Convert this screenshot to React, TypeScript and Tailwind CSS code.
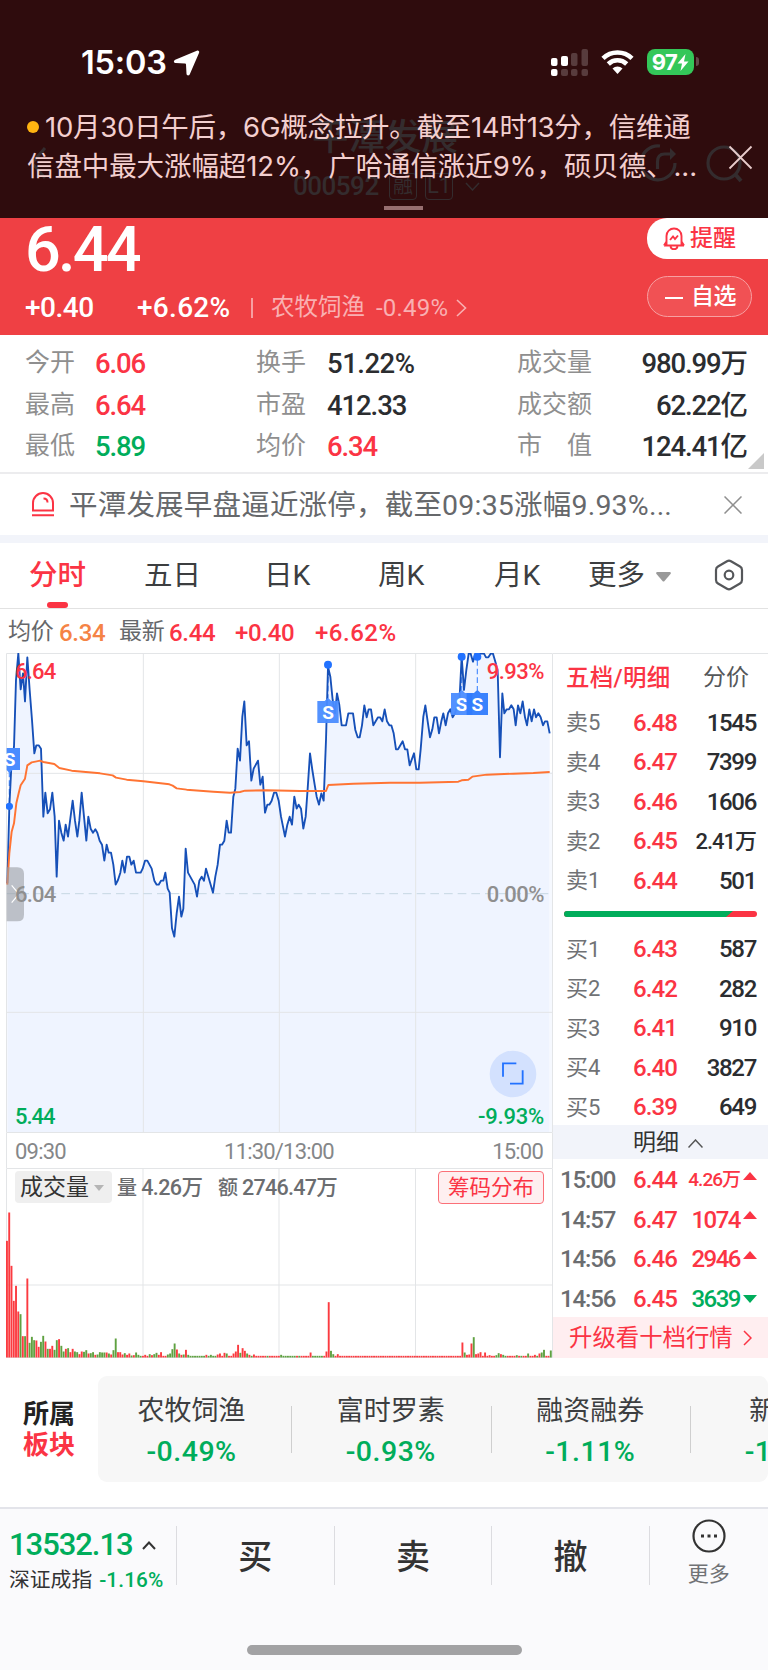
import type { ReactNode } from 'react'

type Level = { label: string; price: string; volume: string }
type Tick = { time: string; price: string; volume: string; up: boolean; small?: boolean }

const sells: Level[] = [
  { label: '卖5', price: '6.48', volume: '1545' },
  { label: '卖4', price: '6.47', volume: '7399' },
  { label: '卖3', price: '6.46', volume: '1606' },
  { label: '卖2', price: '6.45', volume: '2.41万' },
  { label: '卖1', price: '6.44', volume: '501' },
]

const buys: Level[] = [
  { label: '买1', price: '6.43', volume: '587' },
  { label: '买2', price: '6.42', volume: '282' },
  { label: '买3', price: '6.41', volume: '910' },
  { label: '买4', price: '6.40', volume: '3827' },
  { label: '买5', price: '6.39', volume: '649' },
]

const ticks: Tick[] = [
  { time: '15:00', price: '6.44', volume: '4.26万', up: true, small: true },
  { time: '14:57', price: '6.47', volume: '1074', up: true },
  { time: '14:56', price: '6.46', volume: '2946', up: true },
  { time: '14:56', price: '6.45', volume: '3639', up: false },
]

const sectors = [
  { name: '农牧饲渔', change: '-0.49%' },
  { name: '富时罗素', change: '-0.93%' },
  { name: '融资融券', change: '-1.11%' },
  { name: '新能源', change: '-1.02%' },
]

// Chart space: three units per pixel, minute step of about 6.8 units
const priceLine =
  '22,730 28,500 34,380 42,320 48,120 55,40 62,148 69,100 75,184 82,52 89,150 96,240 103,340 109,316 116,316 123,326 130,530 136,458 143,520 150,508 157,458 164,530 170,710 177,542 184,578 191,602 197,554 204,590 211,536 218,482 225,542 232,590 238,542 245,458 252,530 259,602 265,530 272,566 279,578 286,568 292,578 299,602 306,614 313,662 320,614 326,638 333,638 340,674 347,734 354,720 361,698 367,662 374,698 381,650 388,650 394,674 401,662 408,698 422,698 428,686 435,662 442,662 455,686 463,722 470,734 476,734 483,722 490,722 496,698 503,746 509,758 516,865 523,890 530,820 537,770 544,830 550,806 557,626 564,698 584,734 591,770 598,722 605,710 612,722 618,686 639,758 646,710 653,674 660,614 666,614 673,602 680,542 686,578 693,578 700,470 706,446 713,326 720,362 727,230 733,184 740,316 747,304 754,422 761,386 774,362 781,434 788,410 795,518 802,494 808,494 815,482 822,458 829,458 836,482 843,530 855,590 862,554 869,530 876,554 883,470 890,506 896,494 903,506 910,566 917,530 923,446 930,340 937,390 944,434 950,470 957,494 964,460 971,482 978,300 984,80 991,110 998,180 1005,220 1011,160 1018,195 1025,256 1038,256 1045,220 1059,220 1066,270 1073,292 1079,292 1086,256 1093,196 1100,232 1106,208 1113,208 1120,256 1134,232 1140,232 1147,244 1154,208 1161,244 1168,256 1174,256 1181,280 1188,328 1194,328 1208,304 1215,328 1222,328 1229,376 1242,340 1249,388 1256,388 1262,328 1270,230 1276,196 1283,244 1290,292 1297,268 1303,232 1310,232 1317,280 1324,244 1330,220 1337,256 1344,220 1351,208 1358,232 1365,220 1371,200 1378,190 1385,50 1392,150 1399,90 1406,41 1412,41 1419,65 1426,41 1445,41 1452,41 1458,52 1465,52 1472,41 1479,41 1486,65 1493,90 1500,352 1507,160 1513,220 1520,208 1527,208 1534,196 1541,208 1547,256 1554,196 1561,220 1568,184 1575,232 1581,256 1588,208 1595,244 1602,208 1608,232 1615,220 1622,232 1629,256 1635,244 1642,244 1649,280'

const averageLine =
  '22,734 28,640 35,575 42,550 49,490 56,460 62,436 75,416 82,376 95,367 110,364 120,362 130,366 163,372 178,384 215,392 300,400 338,406 348,413 380,419 430,424 508,433 518,437 530,445 560,449 640,455 690,458 720,456 735,452 800,451 900,453 978,453 985,435 1060,431 1170,428 1260,428 1375,425 1385,421 1405,419 1417,410 1460,404 1540,401 1600,399 1649,396'

// Minutes with notable volume, negative when the price fell
const volumes: Record<number, number> = {
  0: 350, 1: 435, 2: 275, 3: 170, 4: 215, 5: 138, 6: -130, 7: 64, 8: -64, 9: 237,
  10: -44, 11: -62, 12: -52, 13: 51, 14: 32, 15: -47, 16: -65, 17: 48, 18: -26, 19: 26,
  20: 35, 21: -23, 22: -52, 23: 55, 24: -35, 25: -18, 26: 26, 27: -28, 28: 16, 29: 26,
  30: -18, 31: -16, 32: 10, 33: 18, 34: -17, 35: -22, 36: 12, 37: -13, 38: -16, 39: 8,
  40: -9, 41: -16, 42: -15, 43: -15, 44: 15, 45: -12, 46: 9, 47: -22, 48: -57, 49: 16,
  50: 16, 51: 9, 52: -13, 53: 8, 54: 12, 55: -6, 56: 7, 57: -15, 58: -8, 61: 8,
  63: -10, 64: 7, 65: -10, 66: -14, 67: 8, 68: 16, 71: -9, 72: -12, 73: -25, 74: -42,
  75: 24, 76: -12, 77: 8, 78: -9, 79: 23, 80: -8, 88: 8, 90: -8, 93: 9, 94: 12,
  96: 14, 97: -12, 100: 12, 101: 18, 102: 38, 103: -14, 104: 28, 105: 20, 106: -12, 107: 8,
  109: 9, 121: -8, 134: 15, 141: 18, 142: 166, 143: -20, 144: -10, 146: 10, 201: 45, 202: -15,
  203: 8, 204: 9, 205: 42, 206: -61, 207: 10, 208: 12, 209: 16, 211: 15, 213: 7, 216: -7,
  217: -13, 218: 10, 219: -8, 225: -7, 230: -12, 233: 8, 235: 12, 236: -15, 237: -23, 238: 5,
  240: -21,
}

const volumeBars = Array.from({ length: 241 }, (_, i) => {
  const quiet = (i > 80 && i < 93) || (i > 121 && i < 128) || (i > 134 && i < 140) || i % 7 === 3
  return volumes[i] ?? (quiet && (i < 148 || i > 210) ? -5 : 5)
})

function StatusBar() {
  return (
    <div className="flex h-[100px] pt-[48px] pl-[81px] font-['Inter',sans-serif] text-white">
      <div className="w-[92px] text-[32.500px] leading-[30px] font-semibold tracking-[-0.2px] whitespace-nowrap">15:03</div>
      <svg className="mt-[2px] h-[26px] w-[27px]" viewBox="0 0 27 26" fill="currentColor">
        <path d="M23.800.7 2.200 9.800C.2 10.700.7 13 2.600 13.100l9.400.3q1 0 1 1l.5 9.300c.1 2 2.500 2.300 3.300.5l9.300-21.500c.6-1.500-.8-2.600-2.300-2Z" />
      </svg>
      <svg className="mt-[1px] ml-[351px] h-[28px] w-[38px]" viewBox="0 0 38 28" fill="currentColor">
        <rect x="0" y="9" width="6.500" height="8" rx="2" />
        <rect x="10" y="7" width="7" height="10" rx="2" />
        <rect x="20" y="4" width="6.500" height="13" rx="2" opacity=".2" />
        <rect x="30.500" y="0" width="6.500" height="17" rx="2" opacity=".2" />
        <rect x="0" y="20" width="6.500" height="7" rx="2" />
        <rect x="10" y="20" width="7" height="7" rx="2" opacity=".2" />
        <rect x="20" y="20" width="6.500" height="7" rx="2" opacity=".2" />
        <rect x="30.500" y="20" width="6.500" height="7" rx="2" opacity=".2" />
      </svg>
      <svg className="mt-[2px] ml-[12px] h-[24px] w-[33px]" viewBox="0 0 33 24" fill="none" stroke="currentColor" strokeWidth="4.600">
        <path d="M2 8.300a21 21 0 0 1 29 0" />
        <path d="M7.300 14a13.300 13.300 0 0 1 18.400 0" />
        <path d="M11.500 18.600a7.300 7.300 0 0 1 10 0L16.500 24Z" fill="currentColor" stroke="none" />
      </svg>
      <div className="mt-[1px] ml-[13px] flex h-[26px] w-[47px] items-center justify-center rounded-[8px] bg-[#34c759] text-[22px] font-bold tracking-[-0.5px]">
        97
        <svg className="h-[17px] w-[12px]" viewBox="0 0 12 17" fill="currentColor">
          <path d="M8.500 0 .5 9.500H5L3.500 17l8-9.500H7Z" />
        </svg>
      </div>
      <div className="mt-[9px] ml-[2px] h-[9px] w-[3px] rounded-r-full bg-white/25" />
    </div>
  )
}

function AlertBanner() {
  return (
    <header className="relative h-[218px] overflow-hidden bg-[#2f0c0d]">
      {/* page title showing through the banner */}
      <div className="absolute top-[119px] left-[312px] text-[36.500px] leading-[38px] font-medium whitespace-nowrap text-[#342c2e]">平潭发展</div>
      <div className="absolute top-[172px] left-[293px] flex items-center text-[26px] leading-[28px] text-[#342c2e]">
        <span className="w-[96px] font-medium tracking-[-0.5px]">000592</span>
        <span className="flex h-[27px] w-[28px] items-center justify-center rounded-[4px] border border-[#342c2e] text-[20px]">融</span>
        <span className="ml-[8px] flex h-[27px] w-[28px] items-center justify-center rounded-[4px] border border-[#342c2e] text-[22px]">L1</span>
        <svg className="ml-[12px] h-[9px] w-[15px]" viewBox="0 0 15 9" fill="none" stroke="currentColor" strokeWidth="1.500">
          <path d="m1 1 6.500 7L14 1" />
        </svg>
      </div>
      <svg className="absolute top-[143px] left-[26px] h-[40px] w-[24px]" viewBox="0 0 24 40" fill="none" stroke="#342c2e" strokeWidth="3">
        <path d="M19 5 6 20l13 15" />
      </svg>
      <svg className="absolute top-[143px] left-[640px] h-[40px] w-[112px]" viewBox="0 0 112 40" fill="none" stroke="#342c2e" strokeWidth="3.200">
        <path d="M20 3a17 17 0 1 0 15 17M17.500 26v-7q0-8 7-8h8" />
        <path d="m30 5 6 6-6 6Z" fill="#342c2e" stroke="none" />
        <circle cx="84" cy="20" r="16" />
        <path d="m95 31 6 7" strokeWidth="4" />
      </svg>
      <div className="relative">
        <StatusBar />
        <div className="flex pt-[8px] pl-[27px] font-['Inter','Noto_Sans_CJK_SC',sans-serif] text-[27.500px] leading-[38.500px] text-[#f3cfcf]">
          <div className="w-[701px] whitespace-nowrap">
            <div className="flex items-center">
              <i className="mr-[6px] h-[12px] w-[12px] rounded-full bg-[#ffb411]" />
              <span className="tracking-[-0.25px]">10月30日午后，6G概念拉升。截至14时13分，信维通</span>
            </div>
            <div className="tracking-[-0.1px]">信盘中最大涨幅超12%，广哈通信涨近9%，硕贝德、...</div>
          </div>
          <svg className="mt-[37px] h-[25px] w-[25px]" viewBox="0 0 25 25" stroke="#e8cccc" strokeWidth="1.800">
            <path d="m1.500 1.500 22 22M23.500 1.500l-22 22" />
          </svg>
        </div>
      </div>
      <div className="absolute top-[206px] left-[384px] h-[4px] w-[39px] bg-[#976f70]" />
    </header>
  )
}

function PriceHeader() {
  return (
    <section className="flex h-[117px] justify-between bg-[#ef4044] text-white">
      <div className="pl-[25px]">
        <div className="h-[63px] text-[63px] leading-[64px] font-medium tracking-[-2.800px]">6.44</div>
        <div className="mt-[12px] flex h-[30px] items-center whitespace-nowrap">
          <span className="w-[112px] text-[28px] font-medium tracking-[-0.5px]">+0.40</span>
          <span className="w-[114px] text-[28px] font-medium tracking-[0.3px]">+6.62%</span>
          <span className="mr-[18px] h-[20px] w-[2px] bg-[#f79fa1]" />
          <span className="w-[105px] text-[23.500px] text-[#f9b0b2]">农牧饲渔</span>
          <span className="w-[80px] text-[24px] tracking-[0.200px] text-[#f9b0b2]">-0.49%</span>
          <svg className="h-[18px] w-[11px]" viewBox="0 0 11 18" fill="none" stroke="#f9b0b2" strokeWidth="1.600">
            <path d="m1 1 8.500 8L1 17" />
          </svg>
        </div>
      </div>
      <div className="w-[121px] text-[23px]">
        <div className="flex h-[41px] items-center rounded-l-[20px] bg-white pt-[2px] pl-[16px] font-medium text-[#fb3444]">
          <svg className="mr-[5px] mb-[2px] h-[24px] w-[22px]" viewBox="0 0 22 24" fill="none" stroke="currentColor" strokeWidth="1.900">
            <path d="M1 18.500h20M3.500 18V9a7.500 7.500 0 0 1 15 0v9M1 18.500l2.500-4M21 18.500l-2.500-4M7.500 19.500c.7 3.500 6.300 3.500 7 0" />
            <path d="m7 13 3-3.500 2 2.500 3-3.500" />
          </svg>
          提醒
        </div>
        <div className="mt-[17px] flex h-[41px] w-[105px] items-center rounded-full border border-[#f7a0a2] bg-[#f15154] pt-[2px] pl-[17px] font-medium">
          <span className="mr-[8px] h-[2px] w-[18px] bg-white" />
          <span className="tracking-[-0.5px]">自选</span>
        </div>
      </div>
    </section>
  )
}

function Stat({ label, value, color = 'text-[#2b2d30]' }: { label: ReactNode; value: string; color?: string }) {
  return (
    <>
      <span className="pt-px text-[25px] text-[#8f8f8f]">{label}</span>
      <span className={`pt-[2px] text-[27.500px] font-medium ${value.includes('%') ? 'tracking-[-0.5px]' : 'tracking-[-1.100px]'} ${color}`}>
        {value}
      </span>
    </>
  )
}

function Stats() {
  return (
    <section className="relative h-[139px] border-b-2 border-[#ececee] bg-white pt-[6px]">
      <div className="grid grid-cols-[70px_161px_71px_190px_100px_130px] pl-[25px] whitespace-nowrap [&>span]:h-[41.500px] [&>span]:leading-[41.500px] [&>span:nth-child(6n)]:text-right">
        <Stat label="今开" value="6.06" color="text-[#fb3444]" />
        <Stat label="换手" value="51.22%" />
        <Stat label="成交量" value="980.99万" />
        <Stat label="最高" value="6.64" color="text-[#fb3444]" />
        <Stat label="市盈" value="412.33" />
        <Stat label="成交额" value="62.22亿" />
        <Stat label="最低" value="5.89" color="text-[#00ad5b]" />
        <Stat label="均价" value="6.34" color="text-[#fb3444]" />
        <Stat label="市　值" value="124.41亿" />
      </div>
      <svg className="absolute top-[118px] left-[748px] h-[16px] w-[16px]" viewBox="0 0 16 16">
        <path d="M16 0v16H0Z" fill="#c9c9c9" />
      </svg>
    </section>
  )
}

function Notice() {
  return (
    <section className="flex h-[69px] items-center border-b-8 border-[#f2f4fa] bg-white pl-[31px]">
      <svg className="h-[25px] w-[24px]" viewBox="0 0 24 25" fill="none" stroke="#fb3444" strokeWidth="2">
        <path d="M2 18.500V11a10 10 0 0 1 20 0v7.500ZM1 23.300h22M12.500 6.500c2.500 0 4 1.500 4 4" />
      </svg>
      <span className="w-[669px] pt-[4px] pl-[14px] text-[28.500px] tracking-[0.200px] whitespace-nowrap text-[#66686b]">平潭发展早盘逼近涨停，截至09:35涨幅9.93%...</span>
      <svg className="h-[18px] w-[18px]" viewBox="0 0 18 18" stroke="#8f8f8f" strokeWidth="1.500">
        <path d="m.5.5 17 17M17.500.500l-17 17" />
      </svg>
    </section>
  )
}

function Tabs() {
  return (
    <nav className="relative flex h-[66px] items-center border-b border-[#e2e2e2] bg-white pt-[2px] pl-[29px] text-[28.500px] whitespace-nowrap text-[#3c3e40]">
      <span className="w-[115px] font-medium text-[#fb3444]">分时</span>
      <span className="w-[120px]">五日</span>
      <span className="w-[114px]">日K</span>
      <span className="w-[116px]">周K</span>
      <span className="w-[94px]">月K</span>
      <span className="w-[68px]">更多</span>
      <svg className="mt-[1px] h-[10px] w-[15px]" viewBox="0 0 15 10" fill="#999">
        <path d="M1 0h13q1.500.500.500 2L8.500 9q-1 1-2 0L.500 2Q-.500.500 1 0" />
      </svg>
      <svg className="mb-[4px] ml-[43px] h-[32px] w-[30px]" viewBox="0 0 30 32" fill="none" stroke="#55575a" strokeWidth="2.200">
        <path d="M13 2.200q2-1.200 4 0l9 5.300q2 1.200 2 3.500v10q0 2.300-2 3.500l-9 5.300q-2 1.200-4 0l-9-5.300q-2-1.200-2-3.500V11q0-2.300 2-3.500Z" />
        <circle cx="15" cy="16" r="4.300" />
      </svg>
      <i className="absolute top-[59px] left-[47px] h-[6px] w-[21px] rounded-full bg-[#fb3444]" />
    </nav>
  )
}

function Summary() {
  return (
    <div className="flex h-[44px] items-center bg-white pt-[3px] pl-[8px] text-[24px] font-medium tracking-[-0.3px] whitespace-nowrap text-[#fb3444]">
      <span className="w-[51px] text-[23px] font-normal text-[#66686b]">均价</span>
      <span className="w-[60px] text-[#f58345]">6.34</span>
      <span className="w-[50px] text-[23px] font-normal text-[#66686b]">最新</span>
      <span className="w-[66px]">6.44</span>
      <span className="w-[80px]">+0.40</span>
      <span className="tracking-[0.500px]">+6.62%</span>
    </div>
  )
}

function SignalBadge({ x, y, solid }: { x: number; y: number; solid?: boolean }) {
  return (
    <g>
      <path d={`M${x - 32} ${y}h22l10-10 10 10h22v66h-64Z`} fill={solid ? '#2f7bfd' : '#4a8cff'} fillOpacity=".95" />
      <text x={x} y={y + 53} fontSize="57" fontWeight="700" fill="#fff" textAnchor="middle">
        S
      </text>
    </g>
  )
}

function PriceChart() {
  return (
    <div className="relative h-[480px] w-[547px] text-[22px] font-medium">
      <svg className="h-[480px] w-[547px]" viewBox="18 39 1641 1440" fill="none">
        <polygon points={`${priceLine} 1649,1476 22,1476`} fill="#eff4ff" />
        <path d="M1649 396h8v1080h-8Z" fill="#f6f9ff" />
        <path d="M19.500 40.500h1638v1437H19.500ZM20 400h1638M20 1117h1638M430 40v1437M838 40v1437M1247 40v1437" stroke="#e3e5e7" strokeWidth="3" />
        <path d="M20 761h1630" stroke="#c6d7e3" strokeWidth="3" strokeDasharray="26 15" />
        <path d="M28 395v100M984 85v90M1385 60v90M1432 60v90" stroke="#4a8cff" strokeWidth="3.500" strokeDasharray="17 9" />
        <polyline points={priceLine} stroke="#1650b8" strokeWidth="5.600" strokeLinejoin="round" />
        <polyline points={averageLine} stroke="#ff7433" strokeWidth="5.800" strokeLinejoin="round" />
        <path d="M20 682h32q20 0 20 20v122q0 20-20 20H20Z" fill="#9a9da3" fillOpacity=".6" />
        <path d="m35 736 22 26-22 26" stroke="#fff" strokeWidth="3.500" />
        <path d="M20 324h40v66H37l-9 9-8-9Z" fill="#4a8cff" />
        <text x="29" y="377" fontSize="57" fontWeight="700" fill="#fff" textAnchor="middle">S</text>
        <SignalBadge x={984} y={183} />
        <SignalBadge x={1385} y={159} />
        <SignalBadge x={1432} y={159} solid />
        <g fill="#2272ff">
          <circle cx="28" cy="499" r="11" />
          <circle cx="984" cy="74" r="12" />
          <circle cx="1385" cy="50" r="12" />
          <circle cx="1432" cy="50" r="12" />
        </g>
        <circle cx="1539" cy="1302" r="70" fill="#d3e1fe" />
        <path d="M1509 1310v-40h40M1530 1331h38v-40" stroke="#2272ff" strokeWidth="5.500" />
      </svg>
      <span className="absolute top-[6px] left-[9px] leading-[26px] tracking-[-0.8px] text-[#fb3444]">6.64</span>
      <span className="absolute top-[6px] right-[9px] leading-[26px] tracking-[-0.5px] text-[#fb3444]">9.93%</span>
      <span className="absolute top-[229px] left-[9px] leading-[26px] tracking-[-0.8px] text-[#8f8f8f]">6.04</span>
      <span className="absolute top-[229px] right-[9px] leading-[26px] tracking-[-0.5px] text-[#8f8f8f]">0.00%</span>
      <span className="absolute top-[451px] left-[9px] leading-[26px] tracking-[-1px] text-[#00ad5b]">5.44</span>
      <span className="absolute top-[451px] right-[9px] leading-[26px] tracking-[-0.2px] text-[#00ad5b]">-9.93%</span>
    </div>
  )
}

function VolumeChart() {
  return (
    <div className="relative h-[190px] w-[547px]">
      <svg className="h-[190px] w-[547px]" viewBox="0 0 547 190" fill="none">
        <path d="M.5.5h546v189H.500ZM0 117h547M137 0v190M273 0v190M409.500 0v190" stroke="#e3e5e7" />
        {volumeBars.map((v, i) => (
          <rect
            key={i}
            x={i * 2.266}
            y={189.500 - Math.abs(v) / 3}
            width="1.900"
            height={Math.abs(v) / 3}
            fill={v > 0 ? '#fb3b40' : '#5fa141'}
          />
        ))}
      </svg>
      <div className="absolute top-[3px] left-[9px] flex h-[32px] w-[529px] items-center text-[21.500px] font-medium whitespace-nowrap text-[#6b6d70]">
        <span className="mr-[5px] flex h-[32px] w-[97px] items-center rounded-[4px] bg-[#efefef] pt-[2px] pl-[5px] text-[23px] font-normal text-[#333]">
          成交量
          <svg className="ml-[5px] h-[6px] w-[10px]" viewBox="0 0 10 6" fill="#b5b5b5">
            <path d="M0 0h10L5 6Z" />
          </svg>
        </span>
        <span className="w-[101px] pt-[2px] tracking-[-0.6px]"><span className="text-[20px]">量</span> 4.26万</span>
        <span className="pt-[2px] tracking-[-0.700px]"><span className="text-[20px]">额</span> 2746.47万</span>
        <span className="ml-auto flex h-[33px] w-[106px] items-center justify-center rounded-[4px] border border-[#fb7078] bg-[#feeff0] pt-[2px] text-[21.500px] font-normal text-[#fb3444]">
          筹码分布
        </span>
      </div>
    </div>
  )
}

function LevelRow({ label, price, volume }: Level) {
  return (
    <div className="flex h-[39.550px] items-center pr-[12px] pl-[13px] text-[24px] font-medium whitespace-nowrap">
      <span className="w-[67px] text-[22px] font-normal text-[#707275]">{label}</span>
      <span className="tracking-[-0.900px] text-[#fb3444]">{price}</span>
      <span className={`ml-auto text-[#2b2d30] ${volume.includes('万') ? 'text-[22px] tracking-[-1px]' : 'tracking-[-1.300px]'}`}>{volume}</span>
    </div>
  )
}

function TickRow({ time, price, volume, up, small }: Tick) {
  return (
    <div className="flex h-[39.500px] items-center pt-[3px] pr-[11px] pl-[7px] text-[24px] font-medium whitespace-nowrap">
      <span className="w-[73px] tracking-[-1.100px] text-[#6b6d70]">{time}</span>
      <span className="tracking-[-0.900px] text-[#fb3444]">{price}</span>
      <span className={`ml-auto ${up ? 'text-[#fb3444]' : 'text-[#00ad5b]'} ${small ? 'text-[19px] tracking-[-1px]' : 'tracking-[-1.500px]'}`}>{volume}</span>
      <svg className={`ml-[3px] h-[8px] w-[14px] ${up ? '-mt-[9px]' : 'rotate-180'}`} viewBox="0 0 14 8" fill={up ? '#fb3444' : '#00ad5b'}>
        <path d="M7 0 14 8H0Z" />
      </svg>
    </div>
  )
}

function OrderBook() {
  return (
    <aside className="h-[705px] w-[215px] border-t border-[#e3e5e7] bg-white">
      <div className="flex h-[49px] items-center pl-[13px] whitespace-nowrap">
        <span className="w-[137px] text-[23.500px] font-medium tracking-[0.3px] text-[#fb3444]">五档/明细</span>
        <span className="text-[23px] text-[#55575a]">分价</span>
      </div>
      {sells.map((level) => (
        <LevelRow key={level.label} {...level} />
      ))}
      <svg className="mt-[10px] mb-[12.500px] ml-[11px] block h-[6px] w-[193px]" viewBox="0 0 193 6">
        <rect width="193" height="6" rx="3" fill="#fb3444" />
        <path d="M3 0h166l-7 6H3a3 3 0 0 1 0-6" fill="#00ad5b" />
      </svg>
      {buys.map((level) => (
        <LevelRow key={level.label} {...level} />
      ))}
      <div className="-mt-[2px] flex h-[34px] items-center bg-[#f2f4fa] pt-[3px] pl-[80px] text-[23px] text-[#333]">
        明细
        <svg className="ml-[9px] h-[9px] w-[15px]" viewBox="0 0 15 9" fill="none" stroke="#555" strokeWidth="1.500">
          <path d="m.5 8.500 7-7.500 7 7.500" />
        </svg>
      </div>
      {ticks.map((tick) => (
        <TickRow key={tick.price} {...tick} />
      ))}
      <div className="flex h-[41px] items-center bg-[#ffeef0] pt-[2px] pl-[16px] text-[23.400px] whitespace-nowrap text-[#fb3444]">
        升级看十档行情
        <svg className="ml-[10px] h-[16px] w-[9px]" viewBox="0 0 9 16" fill="none" stroke="currentColor" strokeWidth="1.500">
          <path d="m1 1 7 7-7 7" />
        </svg>
      </div>
    </aside>
  )
}

function Sectors() {
  return (
    <section className="flex h-[149px] pt-[18px]">
      <div className="w-[98px] pt-[23px] pl-[23px] text-[26px] leading-[31px] font-bold">
        <div className="text-[#222]">所属</div>
        <div className="text-[#fb3444]">板块</div>
      </div>
      <div className="flex h-[106px] w-[670px] overflow-hidden rounded-[9px] bg-[#f7f7f7]">
        {sectors.map((sector, i) => (
          <div key={sector.name} className={`flex shrink-0 items-center ${i === 0 ? 'w-[194px]' : 'w-[199.500px]'}`}>
            <div className={`flex-1 pt-[6px] text-center ${i === 0 ? 'pr-[6px]' : 'pr-px'}`}>
              <div className="text-[27px] leading-[40px] text-[#3c3e40]">{sector.name}</div>
              <div className="text-[28.500px] leading-[42px] font-medium tracking-[0.5px] text-[#00ad5b]">{sector.change}</div>
            </div>
            <span className="h-[47px] w-px bg-[#cfcfcf]" />
          </div>
        ))}
      </div>
    </section>
  )
}

function BottomBar() {
  return (
    <footer className="flex h-[163px] flex-col items-center border-t-2 border-[#e3e4ea] bg-[#fafafc]">
      <div className="flex h-[136px] w-full pt-[17px]">
        <div className="w-[176px] pl-[9px] whitespace-nowrap">
          <div className="flex h-[38px] items-center text-[31px] font-medium tracking-[-1.050px] text-[#00ad5b]">
            13532.13
            <svg className="ml-[9px] h-[9px] w-[14px]" viewBox="0 0 14 9" fill="none" stroke="#333" strokeWidth="2">
              <path d="m1 8 6-6.500L13 8" />
            </svg>
          </div>
          <div className="flex h-[34px] items-center text-[20.800px] text-[#333]">
            深证成指<span className="ml-[7px] font-medium tracking-[0.100px] text-[#00ad5b]">-1.16%</span>
          </div>
        </div>
        {['买', '卖', '撤'].map((action) => (
          <div key={action} className="flex h-[59px] w-[157.600px] items-center justify-center border-l border-[#dcdce0] pt-[4px] text-[34px] font-medium text-[#333]">
            {action}
          </div>
        ))}
        <div className="flex h-[59px] w-[119px] flex-col items-center border-l border-[#dcdce0] text-[21px] leading-[28px] text-[#707275]">
          <svg className="-mt-[7px] mb-[7px] h-[34px] w-[34px] shrink-0" viewBox="0 0 34 34" fill="none" stroke="#333" strokeWidth="2.200">
            <circle cx="17" cy="17" r="15.500" />
            <path d="M9 17h3M15.500 17h3M22 17h3" strokeWidth="3" />
          </svg>
          更多
        </div>
      </div>
      <div className="h-[10px] w-[275px] rounded-full bg-[#a2a2a4]" />
    </footer>
  )
}

export default function App() {
  return (
    <div className="h-[1670px] w-[768px] overflow-hidden bg-white font-['Roboto','Noto_Sans_CJK_SC',sans-serif]">
      <AlertBanner />
      <PriceHeader />
      <Stats />
      <Notice />
      <Tabs />
      <Summary />
      <main className="flex">
        <div className="w-[553px] pl-[6px]">
          <PriceChart />
          <div className="flex h-[35px] w-[547px] items-center justify-between border-x border-[#e3e5e7] pt-[2px] pr-[9px] pl-[8px] text-[22px] tracking-[-0.800px] text-[#858789]">
            <span>09:30</span>
            <span>11:30/13:00</span>
            <span>15:00</span>
          </div>
          <VolumeChart />
        </div>
        <OrderBook />
      </main>
      <Sectors />
      <BottomBar />
    </div>
  )
}
